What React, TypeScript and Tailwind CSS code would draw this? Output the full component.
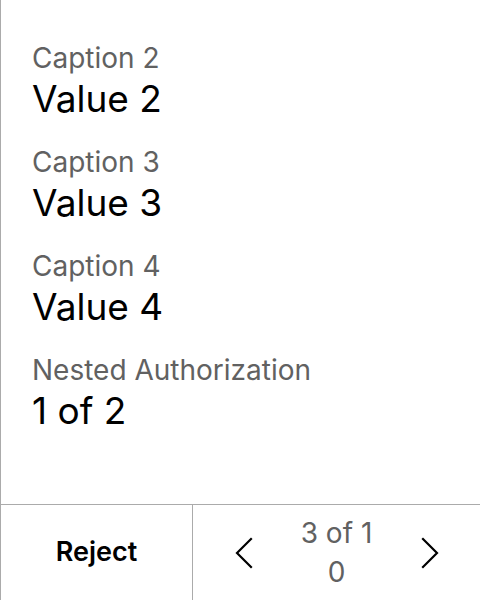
const items = [
  { caption: "Caption 2", value: "Value 2" },
  { caption: "Caption 3", value: "Value 3" },
  { caption: "Caption 4", value: "Value 4" },
  { caption: "Nested Authorization", value: "1 of 2" },
];

function Chevron({ dir }: { dir: "left" | "right" }) {
  return (
    <svg width="20" height="32" viewBox="0 0 20 32" fill="none" stroke="#000" strokeWidth="2.2" strokeLinecap="square">
      {dir === "left" ? <path d="M17 2 L3 16 L17 30" /> : <path d="M3 2 L17 16 L3 30" />}
    </svg>
  );
}

export default function App() {
  return (
    <div className="w-[480px] h-[600px] bg-white flex flex-col border-l border-[#ababab] font-['Inter',sans-serif] overflow-hidden">
      <div className="flex-1 flex flex-col gap-[23px] pt-[40px] px-[31px]">
        {items.map((item) => (
          <div key={item.caption} className="flex flex-col">
            <span className="text-[28px] leading-[36px] text-[#616161]">{item.caption}</span>
            <span className="text-[37px] leading-[44px] mt-px text-black">{item.value}</span>
          </div>
        ))}
      </div>
      <div className="h-[96px] border-t border-[#ababab] flex">
        <button className="w-[192px] border-r border-[#ababab] flex items-center justify-center text-[27px] font-semibold text-black">
          Reject
        </button>
        <div className="flex-1 flex items-center justify-center gap-[29px]">
          <button className="w-12 h-12 flex items-center justify-center">
            <Chevron dir="left" />
          </button>
          <span className="w-20 text-center text-[28px] leading-[39px] text-[#616161] break-all">3 of 10</span>
          <button className="w-12 h-12 flex items-center justify-center">
            <Chevron dir="right" />
          </button>
        </div>
      </div>
    </div>
  );
}
